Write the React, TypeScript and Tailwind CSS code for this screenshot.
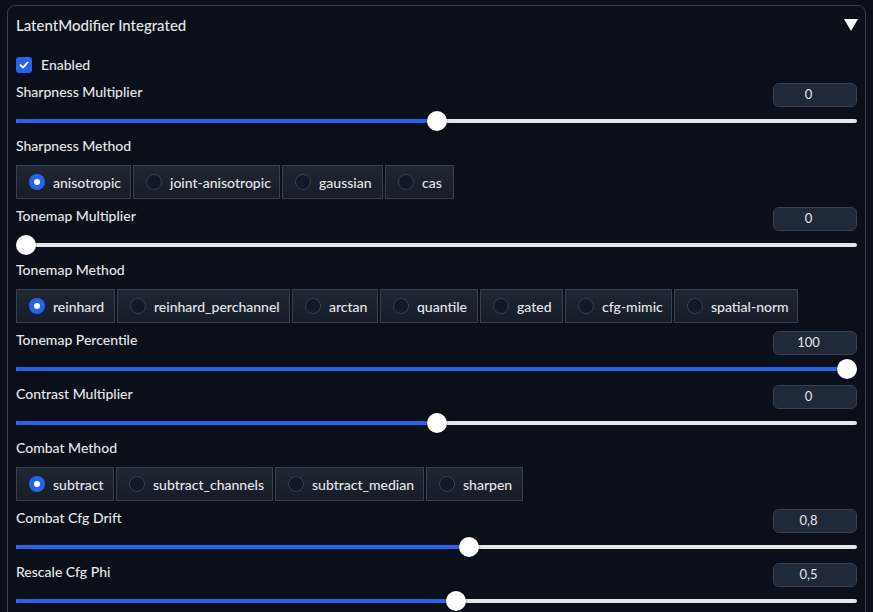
import React from "react";

const font = { fontFamily: "Lato, 'Noto Sans', sans-serif" };

function NumberBox({ value }: { value: string }) {
  return (
    <div className="w-[84px] h-[24px] rounded-md bg-[#1f2937] border border-[#374151] flex items-center justify-center pr-[13px] text-[13px] text-[#e5e7eb]">
      {value}
    </div>
  );
}

function SliderBlock({ label, value, frac }: { label: string; value: string; frac: number }) {
  const center = 10 + frac * 821;
  return (
    <div className="h-[54px] flex flex-col">
      <div className="flex justify-between items-start h-[24px]">
        <span className="text-[14px] leading-[18px] font-medium text-[#e5e7eb]">{label}</span>
        <NumberBox value={value} />
      </div>
      <div className="relative h-[20px] mt-[4px]">
        <div className="absolute left-0 right-0 top-[8px] h-[4px] rounded-full bg-[#e5e7eb]" />
        <div className="absolute left-0 top-[8px] h-[4px] rounded-full bg-[#2563eb]" style={{ width: center }} />
        <div
          className="absolute top-0 w-[20px] h-[20px] rounded-full bg-white shadow-[0_0_2px_rgba(0,0,0,0.6)]"
          style={{ left: center - 10 }}
        />
      </div>
    </div>
  );
}

function RadioBlock({ label, options, widths }: { label: string; options: string[]; widths: number[] }) {
  return (
    <div className="h-[70px] flex flex-col">
      <span className="text-[14px] leading-[18px] font-medium text-[#e5e7eb]">{label}</span>
      <div className="flex gap-[2px] mt-[10px]">
        {options.map((o, i) => (
          <div
            key={o}
            className="h-[34px] flex items-center gap-[8px] pl-3 border border-[#374151] bg-gradient-to-t from-[#161d29] to-[#1f2733]"
            style={{ width: widths[i] }}
          >
            {i === 0 ? (
              <div className="w-[16px] h-[16px] rounded-full bg-[#2563eb] flex items-center justify-center">
                <div className="w-[6px] h-[6px] rounded-full bg-white" />
              </div>
            ) : (
              <div className="w-[16px] h-[16px] rounded-full border border-[#374151] bg-[#111827]" />
            )}
            <span className="text-[14px] font-medium text-[#e5e7eb] whitespace-nowrap">{o}</span>
          </div>
        ))}
      </div>
    </div>
  );
}

export default function App() {
  return (
    <div className="w-[873px] h-[612px] bg-[#0b0f19] overflow-hidden pt-[5px] px-[7px]" style={font}>
      <div className="border border-[#374151] rounded-lg h-[700px] px-[8px]">
        <div className="h-[38px] flex items-center justify-between">
          <span className="text-[15px] font-medium text-[#e5e7eb]">LatentModifier Integrated</span>
          <svg width="14" height="12" viewBox="0 0 14 12" className="mr-[-1px]">
            <polygon points="0,0 14,0 7,12" fill="#ffffff" />
          </svg>
        </div>
        <div className="mt-[8px] h-[25px] flex items-center gap-[9px]">
          <div className="w-[16px] h-[16px] rounded-[3px] bg-[#2563eb] flex items-center justify-center">
            <svg width="10" height="10" viewBox="0 0 10 10">
              <path d="M1.5 5.2 L4 7.6 L8.6 2.4" stroke="white" strokeWidth="1.8" fill="none" strokeLinecap="round" strokeLinejoin="round" />
            </svg>
          </div>
          <span className="text-[14px] font-medium text-[#e5e7eb]">Enabled</span>
        </div>
        <div className="mt-[6px] flex flex-col">
          <SliderBlock label="Sharpness Multiplier" value="0" frac={0.5} />
          <RadioBlock
            label="Sharpness Method"
            options={["anisotropic", "joint-anisotropic", "gaussian", "cas"]}
            widths={[115, 147, 101, 69]}
          />
          <SliderBlock label="Tonemap Multiplier" value="0" frac={0} />
          <RadioBlock
            label="Tonemap Method"
            options={["reinhard", "reinhard_perchannel", "arctan", "quantile", "gated", "cfg-mimic", "spatial-norm"]}
            widths={[99, 173, 86, 98, 83, 107, 124]}
          />
          <SliderBlock label="Tonemap Percentile" value="100" frac={1} />
          <SliderBlock label="Contrast Multiplier" value="0" frac={0.5} />
          <RadioBlock
            label="Combat Method"
            options={["subtract", "subtract_channels", "subtract_median", "sharpen"]}
            widths={[98, 157, 149, 97]}
          />
          <SliderBlock label="Combat Cfg Drift" value="0,8" frac={0.539} />
          <SliderBlock label="Rescale Cfg Phi" value="0,5" frac={0.524} />
        </div>
      </div>
    </div>
  );
}
